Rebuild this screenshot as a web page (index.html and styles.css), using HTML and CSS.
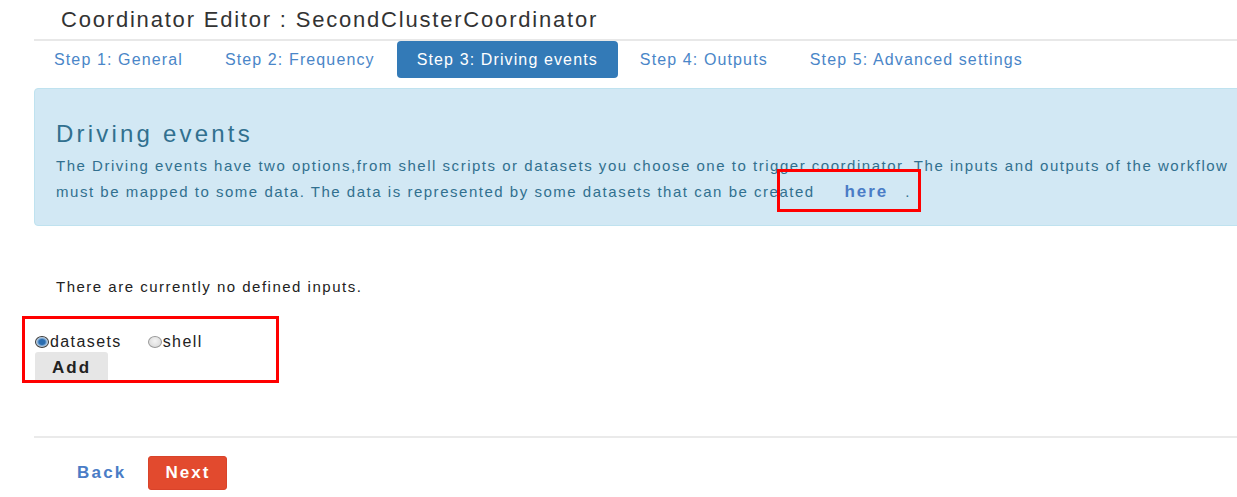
FILE: index.html
```html
<!DOCTYPE html>
<html>
<head>
<meta charset="utf-8">
<link rel="stylesheet" href="styles.css">
</head>
<body>
<div class="page">
  <h1 class="title">Coordinator Editor : SecondClusterCoordinator</h1>
  <ul class="tabs">
    <li><a class="tab">Step 1: General</a></li>
    <li><a class="tab">Step 2: Frequency</a></li>
    <li><a class="tab active">Step 3: Driving events</a></li>
    <li><a class="tab">Step 4: Outputs</a></li>
    <li><a class="tab">Step 5: Advanced settings</a></li>
  </ul>
  <div class="alert">
    <h2 class="alert-title">Driving events</h2>
    <p class="alert-text">The Driving events have two options,from shell scripts or datasets you choose one to trigger coordinator. The inputs and outputs of the workflow must be mapped to some data. The data is represented by some datasets that can be created <span class="here-wrap"><a class="here">here</a><span class="mark mark-here"></span></span><span class="dot">.</span></p>
  </div>
  <p class="empty">There are currently no defined inputs.</p>
  <div class="inputs">
    <span class="mark mark-inputs"></span>
    <div class="radios">
      <label class="radio"><input type="radio" name="kind" checked>datasets</label>
      <label class="radio"><input type="radio" name="kind">shell</label>
    </div>
    <button class="add">Add</button>
  </div>
  <div class="footer">
    <a class="back">Back</a>
    <button class="next">Next</button>
  </div>
</div>
</body>
</html>
```
FILE: styles.css
```css
html, body {
  margin: 0;
  padding: 0;
  background: #fff;
  overflow: hidden;
}
body {
  font-family: "Liberation Sans", Arial, sans-serif;
  color: #333;
}
.page {
  width: 1230px;
  padding-left: 34px;
}
.title {
  margin: 0;
  padding: 7px 0 0 27px;
  height: 32px;
  font-size: 22px;
  letter-spacing: 1.8px;
  font-weight: normal;
  color: #333;
  border-bottom: 2px solid #e8e8e8;
  line-height: 26px;
}
.tabs {
  list-style: none;
  margin: 0;
  padding: 0;
  display: flex;
  gap: 2px;
  height: 37px;
}
.tab {
  display: block;
  padding: 0 20px;
  height: 37px;
  line-height: 37px;
  font-size: 16px;
  letter-spacing: 1.12px;
  color: #4a86c8;
  border-radius: 4px;
}
.tab.active {
  background: #337ab7;
  color: #fff;
}
.alert {
  margin-top: 10px;
  background: #d2e8f4;
  border: 1px solid #bfe2ef;
  border-radius: 4px;
  padding: 30px 21px 11px;
  height: 95px;
}
.alert-title {
  margin: 0;
  font-size: 24px;
  letter-spacing: 3.2px;
  font-weight: normal;
  color: #31708f;
  line-height: 30px;
}
.alert-text {
  margin: 4px 0 0;
  font-size: 15px;
  letter-spacing: 1.52px;
  line-height: 26px;
  color: #31708f;
}
.here-wrap {
  position: relative;
  padding: 0 0 0 24px;
}
.here {
  font-weight: bold;
  color: #4a7cc6;
  font-size: 17px;
  letter-spacing: 2px;
}
.dot {
  padding-left: 17px;
}
.mark {
  position: absolute;
  border: 3px solid #f00;
  box-sizing: border-box;
}
.mark-here {
  left: -43px;
  top: -14px;
  width: 144px;
  height: 43px;
}
.empty {
  margin: 51px 0 0 22px;
  font-size: 15px;
  letter-spacing: 1.5px;
  line-height: 20px;
  color: #222;
}
.inputs {
  position: relative;
  margin-top: 36px;
  padding-left: 1px;
}
.mark-inputs {
  left: -12px;
  top: -17px;
  width: 257px;
  height: 67px;
}
.radios {
  display: flex;
  gap: 26px;
  height: 18px;
  align-items: center;
}
.radio {
  display: flex;
  align-items: center;
  font-size: 16px;
  letter-spacing: 1.4px;
  color: #222;
}
.radio input {
  appearance: none;
  -webkit-appearance: none;
  margin: 0 1px 0 0;
  width: 14px;
  height: 12px;
  border-radius: 50%;
  border: 1px solid #9a9a9a;
  background: radial-gradient(ellipse at 50% 40%, #f4f4f4 0%, #d4d4d4 100%);
  box-sizing: border-box;
}
.radio input:checked {
  border-color: #3a3a3a;
  background: radial-gradient(ellipse at 50% 50%, #2a6db0 0 35%, #8fb6dc 55%, #e6e6e6 75%);
}
.add {
  margin-top: 1px;
  width: 73px;
  height: 31px;
  border: none;
  border-radius: 3px;
  background: #e6e6e6;
  font-family: "Liberation Sans", Arial, sans-serif;
  font-weight: bold;
  font-size: 17px;
  letter-spacing: 2px;
  color: #222;
}
.footer {
  margin-top: 53px;
  border-top: 2px solid #eaeaea;
  padding: 18px 0 0 43px;
  display: flex;
  align-items: center;
  gap: 22px;
}
.back {
  font-weight: bold;
  font-size: 17px;
  letter-spacing: 2.2px;
  color: #4a7cc6;
}
.next {
  width: 79px;
  height: 34px;
  border: 1px solid #d9432a;
  border-radius: 3px;
  background: #e24a2e;
  color: #fff;
  font-family: "Liberation Sans", Arial, sans-serif;
  font-weight: bold;
  font-size: 17px;
  letter-spacing: 2px;
}
```
